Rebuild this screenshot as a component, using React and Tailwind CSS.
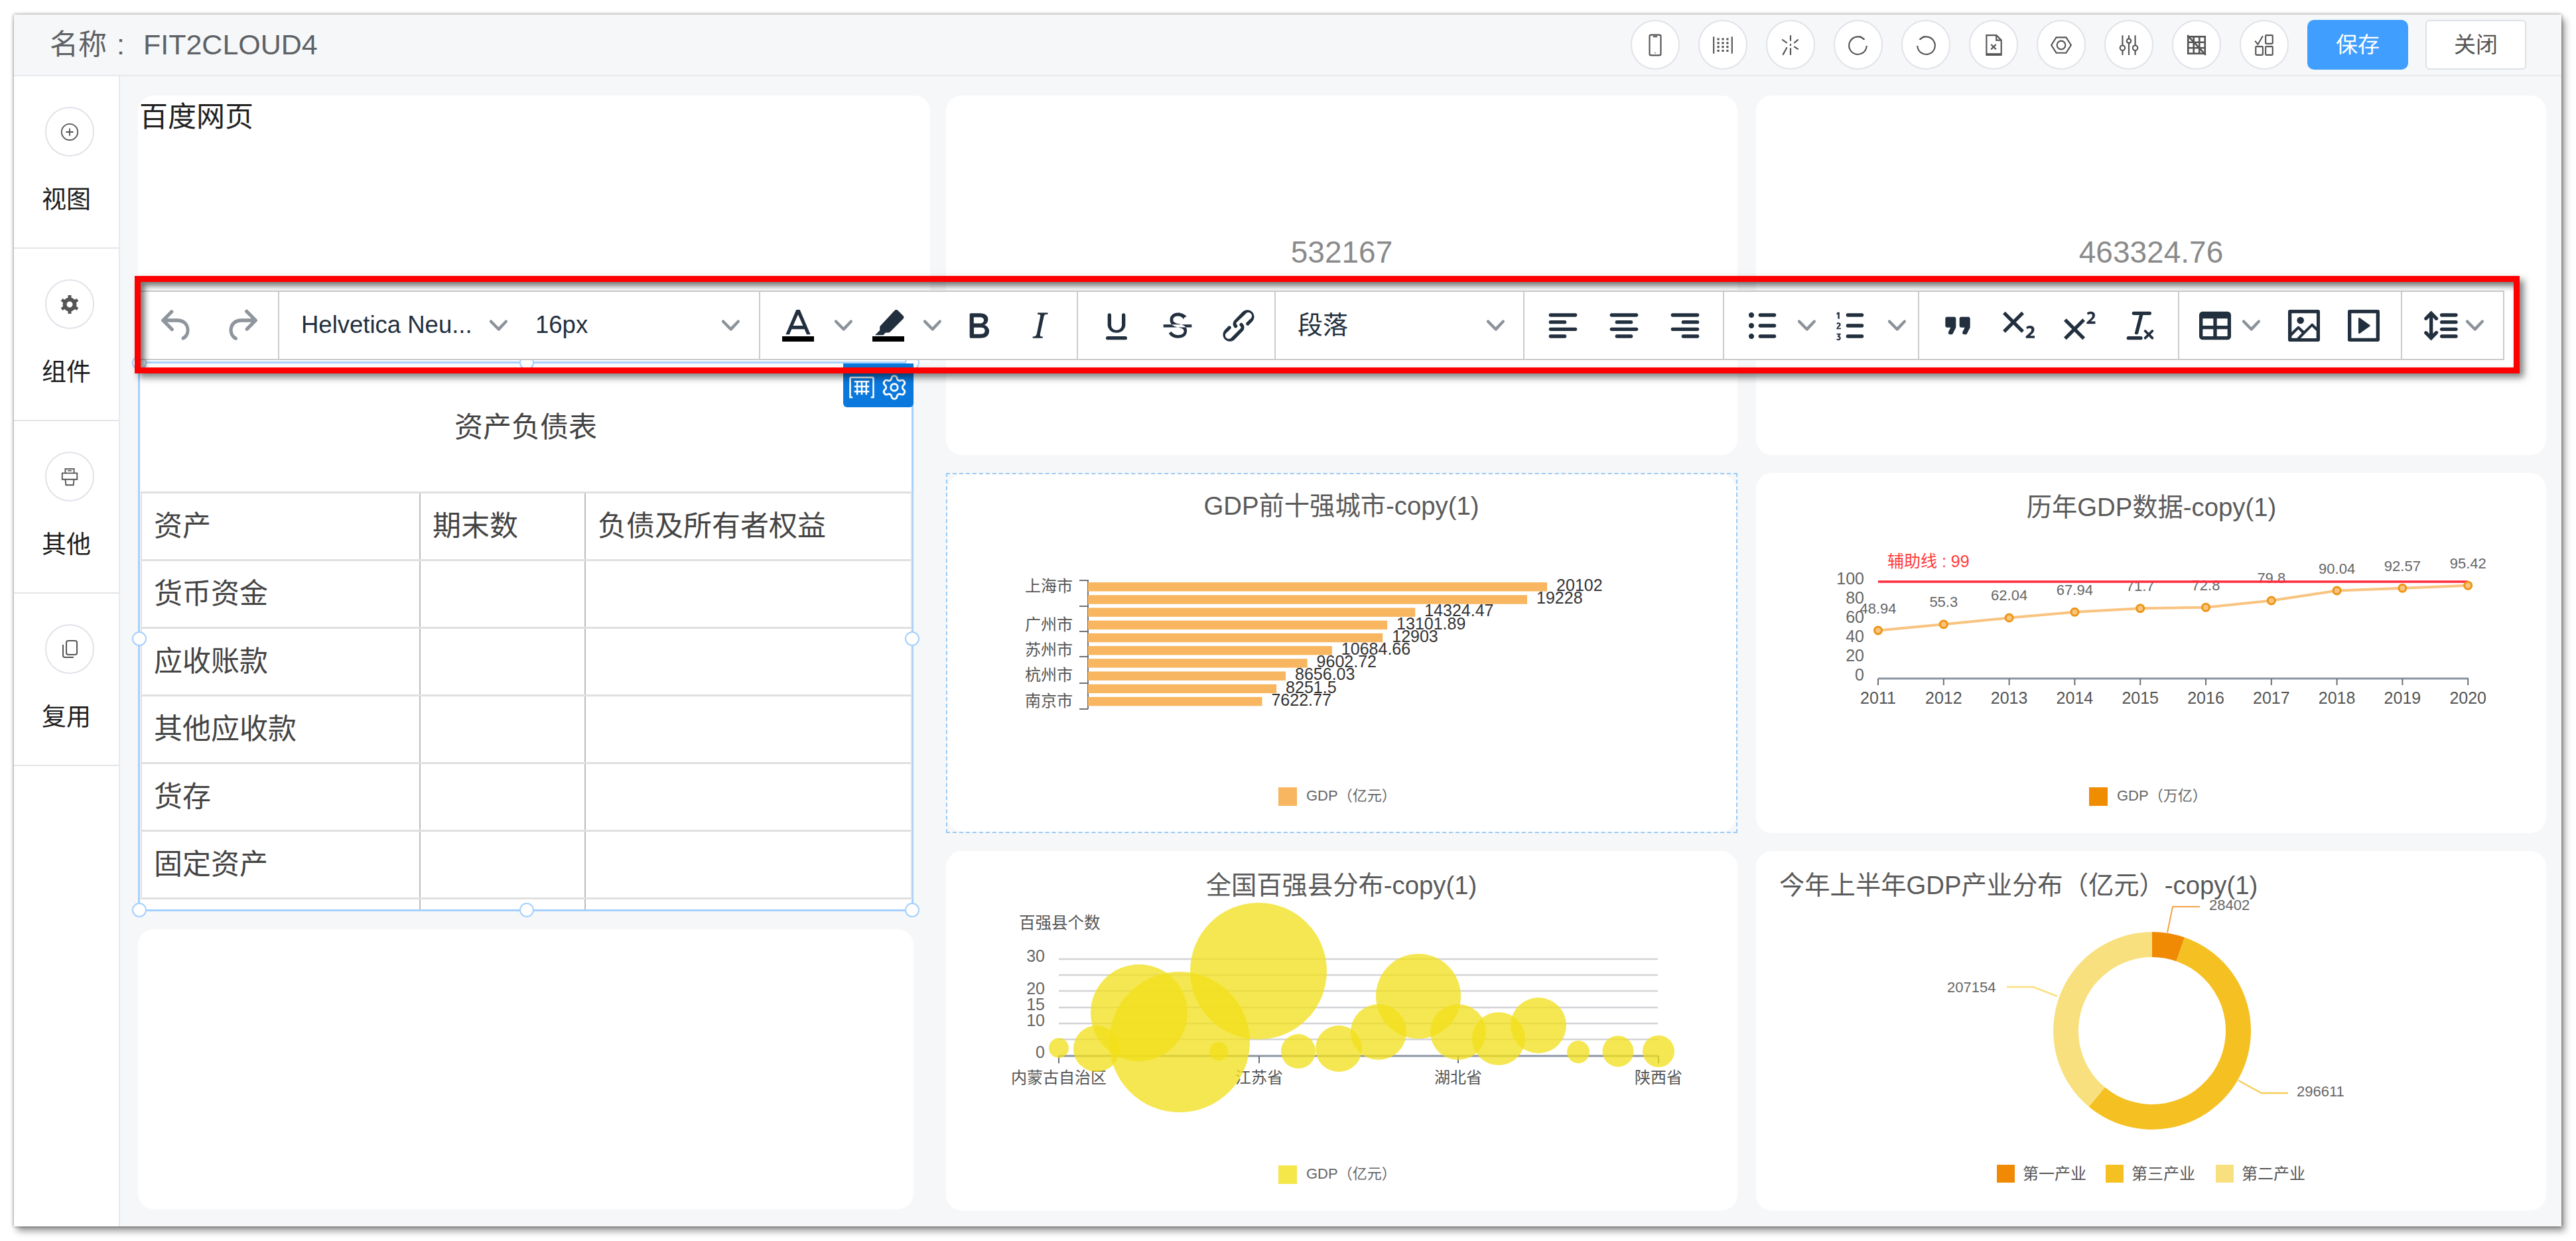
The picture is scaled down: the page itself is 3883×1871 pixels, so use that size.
import React from "react";
import { Settings } from "lucide-react";

const ink = "#222f3e";

// editor toolbar glyphs, 24 unit box
const paths = {
  undo: "M6.4 8H12c3.7 0 6.2 2 6.8 5.1.6 2.7-.4 5.6-2.9 6.9a1 1 0 01-.9-1.8c1.7-.9 2.4-2.9 2-4.7-.4-2.2-2.1-3.5-5-3.5H6.4l3.3 3.3a1 1 0 11-1.4 1.4l-5-5a1 1 0 010-1.4l5-5a1 1 0 011.4 1.4L6.4 8z",
  redo: "M17.6 10H12c-2.8 0-4.4 1.4-4.9 3.5-.4 2 .3 3.9 2 4.8a1 1 0 11-1 1.7c-2.4-1.3-3.4-4.2-2.9-6.9C5.8 10 8.3 8 12 8h5.6l-3.3-3.3a1 1 0 111.4-1.4l5 5a1 1 0 010 1.4l-5 5a1 1 0 01-1.4-1.4l3.3-3.3z",
  textColor: "M15.6 14H8.4l-1.3 3H5l6-14h2l6 14h-2.1l-1.3-3zm-.8-2L12 5.7 9.2 12h5.6z",
  marker: "M15.6 3.4c.5-.5 1.3-.5 1.8 0l3 3c.5.5.5 1.3 0 1.8l-7.3 7.3c-.3.3-.7.4-1 .4h-1.6l-1.4 1.4H4.5l2.7-2.7v-1.6c0-.4.1-.8.4-1z",
  bold: "M7.8 19c-.3 0-.5 0-.6-.2l-.2-.5V5.7c0-.2 0-.4.2-.5l.6-.2h5c1.5 0 2.7.3 3.5 1 .7.6 1.1 1.4 1.1 2.5a3 3 0 01-.6 1.9c-.4.6-1 1-1.6 1.2.4.1.9.3 1.3.6s.8.7 1 1.2c.4.4.5 1 .5 1.6 0 1.3-.4 2.3-1.3 3-.8.7-2.1 1-3.8 1H7.8zm5-8.3c.6 0 1.2-.1 1.6-.5.4-.3.6-.7.6-1.3 0-1.1-.8-1.7-2.3-1.7H9.3v3.5h3.5zm.5 6c.7 0 1.3-.1 1.7-.4.4-.4.6-.9.6-1.5s-.2-1-.7-1.4c-.4-.3-1-.4-2-.4H9.4v3.8h4z",
  italic: "M16.7 4.7l-.1.9h-.3c-.6 0-1 0-1.4.3-.3.3-.4.6-.5 1.1l-2.1 9.8v.6c0 .5.4.8 1.4.8h.2l-.2.8H8l.2-.8h.2c1.1 0 1.8-.5 2-1.5l2-9.8.1-.5c0-.6-.4-.8-1.4-.8h-.3l.2-.9h5.8z",
  underline: "M16 5c.6 0 1 .4 1 1v5.5a4 4 0 01-.4 1.8l-1 1.4a5.3 5.3 0 01-3.6 1.3c-1.4 0-2.6-.4-3.6-1.3l-1-1.4a4 4 0 01-.4-1.8V6c0-.6.4-1 1-1s1 .4 1 1v5.5c0 1.8 1.3 3 3 3s3-1.2 3-3V6c0-.6.4-1 1-1zm1 13a1 1 0 010 2H7a1 1 0 010-2h10z",
  strike: "M15.6 8.5c-.5-.7-1-1.1-1.3-1.3-.6-.4-1.3-.6-2-.6-2.7 0-2.8 1.7-2.8 2.1 0 1.6 1.8 2 3.2 2.3 4.4.9 4.6 2.8 4.6 3.9 0 1.4-.7 4.1-5 4.1A6.2 6.2 0 017 16.4l1.5-1.1c.4.6 1.6 2 3.7 2 1.6 0 2.5-.4 3-1 .3-.4.4-.9.4-1.3 0-.8-.6-1.5-3-2-2.3-.5-4.9-1.3-4.9-4.3 0-1.7 1.1-4 4.7-4 2.2 0 3.8 1 4.7 2.1l-1.5.7zM4 11.3h16v1.6H4z",
  link: "M6.2 12.3a1 1 0 011.4 1.4l-2 2a2 2 0 102.6 2.8l4.8-4.8a1 1 0 000-1.4 1 1 0 111.4-1.3 2.9 2.9 0 010 4L9.6 20a3.9 3.9 0 01-5.5-5.5l2-2zm11.6-.6a1 1 0 01-1.4-1.4l2-2a2 2 0 10-2.6-2.8L11 10a1 1 0 000 1.4A1 1 0 119.6 13a2.9 2.9 0 010-4L14.4 4a3.9 3.9 0 015.5 5.5l-2 2z",
  alignLeft: "M5 5h14c.6 0 1 .4 1 1s-.4 1-1 1H5a1 1 0 110-2zm0 4h8c.6 0 1 .4 1 1s-.4 1-1 1H5a1 1 0 110-2zm0 8h8c.6 0 1 .4 1 1s-.4 1-1 1H5a1 1 0 010-2zm0-4h14c.6 0 1 .4 1 1s-.4 1-1 1H5a1 1 0 010-2z",
  alignCenter: "M5 5h14c.6 0 1 .4 1 1s-.4 1-1 1H5a1 1 0 110-2zm3 4h8c.6 0 1 .4 1 1s-.4 1-1 1H8a1 1 0 110-2zm0 8h8c.6 0 1 .4 1 1s-.4 1-1 1H8a1 1 0 010-2zm-3-4h14c.6 0 1 .4 1 1s-.4 1-1 1H5a1 1 0 010-2z",
  alignRight: "M5 5h14c.6 0 1 .4 1 1s-.4 1-1 1H5a1 1 0 110-2zm6 4h8c.6 0 1 .4 1 1s-.4 1-1 1h-8a1 1 0 010-2zm0 8h8c.6 0 1 .4 1 1s-.4 1-1 1h-8a1 1 0 010-2zm-6-4h14c.6 0 1 .4 1 1s-.4 1-1 1H5a1 1 0 010-2z",
  bullets: "M11 5h8c.6 0 1 .4 1 1s-.4 1-1 1h-8a1 1 0 010-2zm0 6h8c.6 0 1 .4 1 1s-.4 1-1 1h-8a1 1 0 010-2zm0 6h8c.6 0 1 .4 1 1s-.4 1-1 1h-8a1 1 0 010-2zM4.5 6c0-.4.1-.8.4-1 .3-.4.7-.5 1.1-.5s.8.1 1 .4c.4.3.5.7.5 1.1s-.1.8-.4 1c-.3.4-.7.5-1.1.5s-.8-.1-1-.4c-.4-.3-.5-.7-.5-1.1zm0 6c0-.4.1-.8.4-1 .3-.4.7-.5 1.1-.5s.8.1 1 .4c.4.3.5.7.5 1.1s-.1.8-.4 1c-.3.4-.7.5-1.1.5s-.8-.1-1-.4c-.4-.3-.5-.7-.5-1.1zm0 6c0-.4.1-.8.4-1 .3-.4.7-.5 1.1-.5s.8.1 1 .4c.4.3.5.7.5 1.1s-.1.8-.4 1c-.3.4-.7.5-1.1.5s-.8-.1-1-.4c-.4-.3-.5-.7-.5-1.1z",
  numbers: "M11 17h8c.6 0 1 .4 1 1s-.4 1-1 1h-8a1 1 0 010-2zm0-6h8c.6 0 1 .4 1 1s-.4 1-1 1h-8a1 1 0 010-2zm0-6h8c.6 0 1 .4 1 1s-.4 1-1 1h-8a1 1 0 010-2zM5.3 4.4h1v3.8h-.9V5.500l-.7.3v-.8zM4.700 10.600c.3-.5 2.300-.6 2.300.7 0 1-1.400 1.500-1.500 2h1.600v.7H4.600c0-1.500 1.500-2 1.500-2.700 0-.5-.8-.4-1.200 0zM4.700 16.400h2.300v.6l-.9.9c1.400.2 1.200 2.400-.4 2.400-.4 0-.8-.1-1.100-.3l.2-.7c.5.3 1.400.4 1.400-.3 0-.4-.4-.5-1-.5v-.6l.7-.8H4.700z",
  quote: "M7.5 17h.9c.4 0 .7-.2.9-.6L11 13V8c0-.6-.4-1-1-1H6a1 1 0 00-1 1v4c0 .6.4 1 1 1h2l-1.3 2.700a1 1 0 00.8 1.300zm8 0h.9c.4 0 .7-.2.9-.6L19 13V8c0-.6-.4-1-1-1h-4a1 1 0 00-1 1v4c0 .6.4 1 1 1h2l-1.300 2.700a1 1 0 00.8 1.300z",
  sub: "M10.400 10l4.600 4.600-1.400 1.400L9 11.400 4.400 16 3 14.600 7.600 10 3 5.400 4.400 4 9 8.600 13.600 4 15 5.400 10.400 10zM21 19h-5v-1l1-.8 1.700-1.600c.3-.4.5-.8.5-1.200 0-.3 0-.6-.2-.7-.2-.2-.5-.3-.9-.3a2 2 0 00-.8.2l-.7.3-.4-1.100 1-.6 1.200-.2c.8 0 1.400.3 1.800.7.4.4.6.9.6 1.500s-.2 1.100-.5 1.600a8 8 0 01-1.300 1.300l-.6.6h2.600V19z",
  sup: "M15 9.400L10.400 14l4.600 4.600-1.400 1.400L9 15.400 4.400 20 3 18.600 7.600 14 3 9.400 4.400 8 9 12.600 13.600 8 15 9.400zm5.900 1.600h-5v-1l1-.8 1.700-1.600c.3-.5.5-.9.5-1.300 0-.3 0-.5-.2-.7-.2-.2-.5-.3-.9-.3l-.8.2-.7.4-.4-1.200c.2-.2.5-.4 1-.5.3-.2.8-.2 1.200-.2.7 0 1.300.2 1.700.6.4.4.6.9.6 1.500s-.2 1.200-.5 1.600a8 8 0 01-1.300 1.300l-.6.6h2.600V11z",
  clear: "M13.200 6a1 1 0 010 .2l-2.600 10a1 1 0 01-1 .8h-.2a.8.8 0 01-.8-1l2.600-10H8a1 1 0 110-2h9a1 1 0 010 2h-3.800zM5 18h7a1 1 0 010 2H5a1 1 0 010-2zm13 1.500L16.500 18 15 19.500a.7.7 0 01-1-1l1.500-1.500-1.500-1.500a.7.7 0 011-1l1.500 1.500 1.500-1.500a.7.7 0 011 1L17.500 17l1.500 1.500a.7.7 0 01-1 1z",
  table: "M19 4a2 2 0 012 2v12a2 2 0 01-2 2H5a2 2 0 01-2-2V6c0-1.100.9-2 2-2h14zM5 14v4h6v-4H5zm14 0h-6v4h6v-4zm0-6h-6v4h6V8zM5 12h6V8H5v4z",
  image: "M5 15.700l3.300-3.200c.3-.3.7-.3 1 0L12 15l4.100-4c.3-.4.8-.4 1 0l2 1.900V5H5v10.700zM5 18v1h3l2.800-2.900-2-2L5 17.900zm14-3l-2.500-2.400-6.400 6.500H19v-4zM4 3h16c.6 0 1 .4 1 1v16c0 .6-.4 1-1 1H4a1 1 0 01-1-1V4c0-.6.4-1 1-1zm6 8a2 2 0 110-4 2 2 0 010 4z",
  media: "M4 3h16c.6 0 1 .4 1 1v16c0 .6-.4 1-1 1H4a1 1 0 01-1-1V4c0-.6.4-1 1-1zm1 2v14h14V5H5zm4.800 2.600l5.600 4a.5.5 0 010 .8l-5.600 4A.5.5 0 019 16V8a.5.5 0 01.8-.4z",
  lineHeight: "M21 5a1 1 0 01.1 2H13a1 1 0 01-.1-2H21zm0 4a1 1 0 01.1 2H13a1 1 0 01-.1-2H21zm0 4a1 1 0 01.1 2H13a1 1 0 01-.1-2H21zm0 4a1 1 0 01.1 2H13a1 1 0 01-.1-2H21zM7 3.600l3.700 3.700a1 1 0 01-1.300 1.500h-.1L8 7.300v9.200l1.300-1.300a1 1 0 011.300 0h.1c.4.400.4 1 0 1.300v.1L7 20.400l-3.700-3.700a1 1 0 011.300-1.500h.1L6 16.700V7.400L4.700 8.700a1 1 0 01-1.300 0h-.1a1 1 0 010-1.300v-.1L7 3.600z",
};

function Ic({ d, color = ink, bar }) {
  return (
    <svg viewBox="0 0 24 24" className="h-[64px] w-[64px] shrink-0" fill={color} fillRule="evenodd">
      <path d={d} />
      {bar && <rect x="3" y="18" width="18" height="3" fill="#000" />}
    </svg>
  );
}

function Chev({ className = "" }) {
  return (
    <svg viewBox="0 0 10 10" className={`h-[27px] w-[27px] shrink-0 ${className}`} fill="#8b929a">
      <path d="M8.700 2.200c.3-.3.8-.3 1 0 .4.4.4.9 0 1.200L5.700 7.800c-.3.3-.9.3-1.200 0L.2 3.400a.8.8 0 010-1.200c.3-.3.8-.3 1.100 0L5 6l3.700-3.800z" />
    </svg>
  );
}

function Toolbar() {
  const group = "flex h-full shrink-0 items-center border-r-2 border-[#cccccc]";
  return (
    <div className="flex h-[105px] w-[3563px] border-y-2 border-r-2 border-[#cccccc] bg-white text-[36.5px] text-[#222f3e]">
      <div className={`${group} w-[209px] gap-[33px] pl-[23px]`}>
        <Ic d={paths.undo} color="#8f959c" />
        <Ic d={paths.redo} color="#8f959c" />
      </div>
      <div className={`${group} w-[725px] pl-[33px]`}>
        <div className="flex w-[311px] items-center justify-between">
          <span>Helvetica Neu...</span>
          <Chev />
        </div>
        <div className="ml-[42px] flex w-[308px] items-center justify-between">
          <span>16px</span>
          <Chev />
        </div>
      </div>
      <div className={`${group} w-[479px] pl-[25px]`}>
        <Ic d={paths.textColor} bar />
        <Chev className="ml-[23px]" />
        <div className="ml-[22px]"><Ic d={paths.marker} bar /></div>
        <Chev className="ml-[21px]" />
        <div className="ml-[24px]"><Ic d={paths.bold} /></div>
        <div className="ml-[28px]"><Ic d={paths.italic} /></div>
      </div>
      <div className={`${group} w-[298px] gap-[28px] pl-[26px]`}>
        <Ic d={paths.underline} />
        <Ic d={paths.strike} />
        <Ic d={paths.link} />
      </div>
      <div className={`${group} w-[375px] pl-[33px]`}>
        <div className="flex w-[312px] items-center justify-between text-[38px]">
          <span>段落</span>
          <Chev />
        </div>
      </div>
      <div className={`${group} w-[301px] gap-[28px] pl-[26px]`}>
        <Ic d={paths.alignLeft} />
        <Ic d={paths.alignCenter} />
        <Ic d={paths.alignRight} />
      </div>
      <div className={`${group} w-[294px] pl-[25px]`}>
        <Ic d={paths.bullets} />
        <Chev className="ml-[22px]" />
        <div className="ml-[19px]"><Ic d={paths.numbers} /></div>
        <Chev className="ml-[26px]" />
      </div>
      <div className={`${group} w-[392px] gap-[28px] pl-[26px]`}>
        <Ic d={paths.quote} />
        <Ic d={paths.sub} />
        <Ic d={paths.sup} />
        <Ic d={paths.clear} />
      </div>
      <div className={`${group} w-[336px] pl-[22px]`}>
        <Ic d={paths.table} />
        <Chev className="ml-[9px]" />
        <div className="ml-[34px]"><Ic d={paths.image} /></div>
        <div className="ml-[26px]"><Ic d={paths.media} /></div>
      </div>
      <div className="flex h-full flex-1 items-center pl-[25px]">
        <Ic d={paths.lineHeight} />
        <Chev className="ml-[7px]" />
      </div>
    </div>
  );
}

// small line icons of the header and the sidebar
function Line({ size = 36, children, color = "#555" }) {
  return (
    <svg viewBox="0 0 32 32" width={size} height={size} fill="none" stroke={color} strokeWidth="2">
      {children}
    </svg>
  );
}

const headerIcons = [
  <><rect x="8" y="1.500" width="16" height="29" rx="2" /><path d="M13 4h6M16 26.500v1" /></>,
  <><path d="M3 4v24M29 4v24" /><path d="M8 7.500h3M14.500 7.500h3M21 7.500h3M8 13h3M14.500 13h3M21 13h3M8 18.500h3M14.500 18.500h3M21 18.500h3M8 24h3M14.500 24h3M21 24h3" strokeWidth="3" /></>,
  <path d="M16 2v8M16 20v10M4 8l7 5M21 18l6 4M27 8l-6 5M11 19l-6 11M16 14v3" />,
  <><path d="M24 7.500A12.500 12.500 0 1 0 28 17" /><path d="M18 3.500l6 4-1 .5" /></>,
  <><path d="M8 7.500A12.500 12.500 0 1 1 4 17" /><path d="M14 3.500l-6 4 1 .5" /></>,
  <><path d="M6 2h14l7 7v21H6z" /><path d="M20 2v7h7M12.500 15l7 7M19.500 15l-7 7" /><path d="M6 29h21" strokeWidth="3" /></>,
  <><path d="M2 16L9 5h14l7 11-7 11H9z" /><circle cx="16" cy="16" r="6" /></>,
  <><path d="M7 2v15M7 24v6M16 2v5M16 13v17M25 2v15M25 24v6" /><circle cx="7" cy="20" r="3.500" /><circle cx="16" cy="10" r="3" /><circle cx="25" cy="20" r="3.500" /></>,
  <><rect x="4" y="4" width="24" height="24" strokeWidth="2.500" /><path d="M4 12h24M4 20h24M12 4v24M20 4v24" strokeWidth="2.500" /><path d="M3 2l26 28" strokeWidth="2.500" /></>,
  <><path d="M3 10l4 5 7-12" /><rect x="18" y="2" width="10" height="12" rx="1" /><rect x="4" y="18" width="10" height="12" rx="1" /><rect x="18" y="18" width="10" height="12" rx="1" /></>,
];

const Circle = ({ className = "", children }) => (
  <div className={`flex h-[75px] w-[74px] shrink-0 items-center justify-center rounded-full border-2 border-[#e1e3e9] bg-white ${className}`}>
    {children}
  </div>
);

const sideItems = [
  {
    label: "视图",
    icon: <Line size={30}><circle cx="16" cy="16" r="13" /><path d="M16 10v12M10 16h12" /></Line>,
  },
  {
    label: "组件",
    icon: (
      <Line size={32}>
        <circle cx="16" cy="16" r="7.500" strokeWidth="6" />
        <path d="M16 2v5M16 25v5M4 9l4 2.500M24 20.500l4 2.500M4 23l4-2.500M24 11.500L28 9" strokeWidth="5" />
      </Line>
    ),
  },
  {
    label: "其他",
    icon: <Line size={30}><path d="M9 3h14v7H9zM4 10h24v10H4zM9 20l1 9h12l1-9M9 3v3M13 6h6" /></Line>,
  },
  {
    label: "复用",
    icon: <Line size={32}><rect x="11" y="3" width="16" height="21" rx="3" /><path d="M6 9v16a3 3 0 003 3h13" /></Line>,
  },
];

function GridIcon() {
  return (
    <svg viewBox="0 0 32 28" className="h-[36px] w-[40px]" fill="none" stroke="#fff" strokeWidth="2">
      <path d="M2 2v24h3M30 2v24h-3M2 2h28" />
      <path d="M7 7h18M7 13h18M7 19h18M10.500 7v16M16 7v16M21.500 7v16" />
    </svg>
  );
}

const handles = [
  "-left-[12px] -top-[12px]",
  "left-[572px] -top-[12px]",
  "-right-[12px] -top-[12px]",
  "-left-[12px] top-[404px]",
  "-right-[12px] top-[404px]",
  "-left-[12px] -bottom-[12px]",
  "left-[572px] -bottom-[12px]",
  "-right-[12px] -bottom-[12px]",
];

const rows = ["货币资金", "应收账款", "其他应收款", "货存", "固定资产"];
const cell = "border-y-[3px] border-y-[#e0e0e0] pl-[18px] text-left font-normal";
const first = `${cell} border-l-2 border-l-[#e0e0e0]`;
const mid = `${cell} border-x-2 border-x-[#bdbdbd]`;
const last = `${cell} border-r-2 border-r-[#e0e0e0]`;

function BalanceSheet() {
  return (
    <div className="relative h-[829px] w-[1169px] border-[3px] border-[#a4d1fd] bg-white text-[43px] text-[#444]">
      <div className="flex h-[193px] items-center justify-center">资产负债表</div>
      <table className="ml-[1px] w-[1161px] table-fixed border-collapse">
        <colgroup>
          <col className="w-[420px]" />
          <col className="w-[249px]" />
          <col className="w-[492px]" />
        </colgroup>
        <tbody>
          <tr className="h-[102px]">
            <td className={first}>资产</td>
            <td className={mid}>期末数</td>
            <td className={last}>负债及所有者权益</td>
          </tr>
          {rows.map((r) => (
            <tr key={r} className="h-[102px]">
              <td className={first}>{r}</td>
              <td className={mid} />
              <td className={last} />
            </tr>
          ))}
          <tr className="h-[17px]">
            <td />
            <td className="border-x-2 border-x-[#bdbdbd]" />
            <td />
          </tr>
        </tbody>
      </table>
      {handles.map((h) => (
        <div key={h} className={`absolute h-[22px] w-[22px] rounded-full border-2 border-[#a4d1fd] bg-white ${h}`} />
      ))}
      <div className="absolute -right-[3px] top-[0px] flex h-[66px] w-[106px] items-center justify-center gap-[8px] rounded-b-[6px] bg-[#0a78dc] pt-[6px]">
        <GridIcon />
        <Settings size={42} color="#fff" strokeWidth={1.6} />
      </div>
    </div>
  );
}

function Legend({ x, color, label, y = 0 }) {
  return (
    <g>
      <rect x={x} y={y} width="28" height="28" fill={color} />
      <text x={x + 42} y={y + 20} fontSize="22" fill="#666">{label}</text>
    </g>
  );
}

const Title = ({ x, y, anchor = "middle", children }) => (
  <text x={x} y={y} textAnchor={anchor} fontSize="38.300" fill="#5a5a5a">{children}</text>
);

function BarChart() {
  const values = [20102, 19228, 14324.47, 13101.89, 12903, 10684.66, 9602.72, 8656.03, 8251.5, 7622.77];
  const names = { 0: "上海市", 3: "广州市", 5: "苏州市", 7: "杭州市", 9: "南京市" };
  return (
    <svg viewBox="1428 715 1189 539" className="block h-full w-full">
      <Title x={2022} y={776}>GDP前十强城市-copy(1)</Title>
      <path d="M1640 874V1069" stroke="#6e7079" strokeWidth="2" />
      {[875, 914, 952, 990, 1030, 1069].map((y) => (
        <path key={y} d={`M1627 ${y}H1640`} stroke="#6e7079" strokeWidth="2" />
      ))}
      {values.map((v, i) => {
        const y = 878 + i * 19.2;
        const end = 1640 + v * 0.03443;
        return (
          <g key={v}>
            <rect x="1640" y={y} width={end - 1640} height="13.500" fill="#f7b65f" />
            <text x={end + 14} y={y + 13} fontSize="25" fill="#333">{v}</text>
            {names[i] && (
              <text x="1617" y={y + 14} textAnchor="end" fontSize="24" fill="#555">{names[i]}</text>
            )}
          </g>
        );
      })}
      <Legend x={1927} y={1187} color="#f7b65f" label="GDP（亿元）" />
    </svg>
  );
}

function LineChart() {
  const values = [48.94, 55.3, 62.04, 67.94, 71.7, 72.8, 79.8, 90.04, 92.57, 95.42];
  const pts = values.map((v, i) => [2831 + i * 98.8, 1022 - v * 1.46]);
  return (
    <svg viewBox="2647 713 1191 543" className="block h-full w-full">
      <Title x={3243} y={778}>历年GDP数据-copy(1)</Title>
      <text x="2845" y="855" fontSize="25" fill="#ff3b3b">辅助线 : 99</text>
      {["100", "80", "60", "40", "20", "0"].map((t, i) => (
        <text key={t} x="2810" y={881 + i * 29} textAnchor="end" fontSize="25" fill="#666">{t}</text>
      ))}
      <path d="M2831 1023H3721" stroke="#8d95a3" strokeWidth="3" />
      {values.map((v, i) => (
        <g key={v}>
          <path d={`M${2831 + i * 98.8} 1023V1033`} stroke="#6e7079" strokeWidth="2" />
          <text x={2831 + i * 98.8} y="1061" textAnchor="middle" fontSize="25" fill="#555">{2011 + i}</text>
          <text x={pts[i][0]} y={pts[i][1] - 26} textAnchor="middle" fontSize="22" fill="#666">{v}</text>
        </g>
      ))}
      <path d="M2831 877H3720" stroke="#ff2a3c" strokeWidth="3.500" />
      <polyline points={pts.map((p) => p.join(",")).join(" ")} fill="none" stroke="#f8c480" strokeWidth="4" strokeLinejoin="round" />
      {pts.map((p) => (
        <circle key={p[0]} cx={p[0]} cy={p[1]} r="5.500" fill="#f8c480" stroke="#ee9513" strokeWidth="3" />
      ))}
      <Legend x={3149} y={1187} color="#f08c00" label="GDP（万亿）" />
    </svg>
  );
}

function BubbleChart() {
  // center x, center y, radius
  const bubbles = [
    [1596, 1580, 15], [1653, 1581, 35], [1717, 1527, 73], [1778, 1571, 106], [1897, 1464, 103],
    [1837, 1585, 14], [1957, 1585, 26], [2018, 1581, 35], [2078, 1556, 42], [2138, 1502, 64],
    [2198, 1556, 42], [2259, 1566, 40], [2319, 1546, 42], [2379, 1586, 17], [2439, 1585, 23.500], [2500, 1585, 24],
  ];
  return (
    <svg viewBox="1426 1283 1193 542" className="block h-full w-full">
      <Title x={2022} y={1348}>全国百强县分布-copy(1)</Title>
      <text x="1536" y="1400" fontSize="24.500" fill="#555">百强县个数</text>
      {[1446, 1470, 1494, 1519, 1543, 1567].map((y) => (
        <path key={y} d={`M1596 ${y}H2499`} stroke="#d4d4d8" strokeWidth="2.500" />
      ))}
      {[["30", 1450], ["20", 1499], ["15", 1523], ["10", 1547], ["0", 1595]].map(([t, y]) => (
        <text key={t} x="1575" y={y} textAnchor="end" fontSize="25" fill="#666">{t}</text>
      ))}
      <path d="M1596 1592H2500" stroke="#8d95a3" strokeWidth="3" />
      {[1596, 1898, 2198, 2500].map((x) => (
        <path key={x} d={`M${x} 1592V1603`} stroke="#6e7079" strokeWidth="2" />
      ))}
      {[["内蒙古自治区", 1596], ["江苏省", 1898], ["湖北省", 2198], ["陕西省", 2500]].map(([t, x]) => (
        <text key={t} x={x} y="1633" textAnchor="middle" fontSize="24" fill="#555">{t}</text>
      ))}
      {bubbles.map(([x, y, r]) => (
        <circle key={x} cx={x} cy={y} r={r} fill="#f2e01a" fillOpacity="0.76" />
      ))}
      <Legend x={1927} y={1757} color="#f5e64a" label="GDP（亿元）" />
    </svg>
  );
}

function arc(cx, cy, R, r, a0, a1) {
  const p = (rad, a) => {
    const t = ((a - 90) * Math.PI) / 180;
    return `${(cx + rad * Math.cos(t)).toFixed(2)} ${(cy + rad * Math.sin(t)).toFixed(2)}`;
  };
  const large = a1 - a0 > 180 ? 1 : 0;
  return `M${p(R, a0)}A${R} ${R} 0 ${large} 1 ${p(R, a1)}L${p(r, a1)}A${r} ${r} 0 ${large} 0 ${p(r, a0)}Z`;
}

function DonutChart() {
  const legend = [
    ["第一产业", 3010, "#f08a05"],
    ["第三产业", 3174, "#f5c022"],
    ["第二产业", 3340, "#f9e07f"],
  ];
  return (
    <svg viewBox="2647 1283 1191 542" className="block h-full w-full">
      <Title x={2682} y={1348} anchor="start">今年上半年GDP产业分布（亿元）-copy(1)</Title>
      <path d={arc(3244, 1554, 149, 111, 0, 19.2)} fill="#f08a05" />
      <path d={arc(3244, 1554, 149, 111, 19.2, 219.8)} fill="#f5c022" />
      <path d={arc(3244, 1554, 149, 111, 219.8, 360)} fill="#f9e07f" />
      <path d="M3267 1406L3275 1367H3316" fill="none" stroke="#f3a345" strokeWidth="2" />
      <path d="M3374 1629L3409 1648H3449" fill="none" stroke="#f6cd5a" strokeWidth="2.500" />
      <path d="M3101 1502L3065 1488H3025" fill="none" stroke="#f9e07f" strokeWidth="2.500" />
      <text x="3330" y="1372" fontSize="22" fill="#666">28402</text>
      <text x="3462" y="1653" fontSize="22" fill="#666">296611</text>
      <text x="2935" y="1496" fontSize="22" fill="#666">207154</text>
      {legend.map(([t, x, c]) => (
        <g key={t}>
          <rect x={x} y="1756" width="27" height="27" fill={c} />
          <text x={x + 39} y="1778" fontSize="24" fill="#555">{t}</text>
        </g>
      ))}
    </svg>
  );
}

const card = "rounded-[24px] bg-white";

export default function App() {
  return (
    <div className="relative h-[1871px] w-[3883px] overflow-hidden bg-white pl-[21px] pt-[22px] font-['Liberation_Sans','Noto_Sans_CJK_SC',sans-serif]">
      <div className="flex h-[1827px] w-[3840px] flex-col bg-[#f6f7f9] shadow-[0_0_5px_rgba(0,0,0,0.45),5px_7px_10px_rgba(0,0,0,0.4)]">
        <header className="flex h-[93px] shrink-0 items-center border-b-2 border-[#e8e9ec] pl-[54px] pr-[53px]">
          <div className="flex text-[43px] text-[#5f6266]">
            <span>名称</span>
            <span className="ml-[15px] mr-[28px]">:</span>
            <span>FIT2CLOUD4</span>
          </div>
          <div className="ml-auto flex gap-[28px]">
            {headerIcons.map((ic, i) => (
              <Circle key={i}>
                <Line size={34}>{ic}</Line>
              </Circle>
            ))}
          </div>
          <button className="ml-[28px] h-[75px] w-[152px] rounded-[10px] bg-[#409eff] text-[33px] text-white">保存</button>
          <button className="ml-[26px] h-[75px] w-[152px] rounded-[6px] border-2 border-[#dfe1e6] bg-white text-[33px] text-[#555]">关闭</button>
        </header>

        <div className="flex min-h-0 flex-1">
          <aside className="w-[160px] shrink-0 border-r-2 border-[#e8e9ec] bg-white">
            {sideItems.map((it) => (
              <div key={it.label} className="flex h-[260px] flex-col items-center border-b-2 border-[#e4e5e8] pt-[46px]">
                <Circle className="ml-[10px]">{it.icon}</Circle>
                <div className="mt-[43px] text-[37px] leading-[45px] text-[#1c1c1c]">{it.label}</div>
              </div>
            ))}
          </aside>

          <main className="flex min-w-0 flex-1 pl-[27px] pt-[29px]">
            <div className="mr-[24px] flex w-[1194px] shrink-0 flex-col">
              <div className="h-[401px] rounded-t-[24px] bg-white pl-[2px] pt-[6px] text-[43px] leading-[52px] text-[#222]">百度网页</div>
              <BalanceSheet />
              <div className="mt-[27px] h-[422px] w-[1169px] rounded-[24px] bg-white" />
            </div>

            <div className="grid h-[1681px] grid-cols-[1193px_1191px] grid-rows-[542px_543px_542px] gap-x-[28px] gap-y-[27px]">
              <div className={`${card} pt-[207px] text-center text-[46px] leading-[58px] text-[#8a8a8a]`}>532167</div>
              <div className={`${card} pt-[207px] text-center text-[46px] leading-[58px] text-[#8a8a8a]`}>463324.76</div>
              <div className="border-2 border-dashed border-[#9acbf5]">
                <div className={`${card} h-full`}><BarChart /></div>
              </div>
              <div className={card}><LineChart /></div>
              <div className={card}><BubbleChart /></div>
              <div className={card}><DonutChart /></div>
            </div>
          </main>
        </div>
      </div>

      {/* red annotation frame with the editor toolbar, on top of the canvas */}
      <div className="absolute left-[203px] top-[416px] h-[147px] w-[3595px] border-[9px] border-[#ff0000] pt-[13px] shadow-[6px_6px_10px_rgba(0,0,0,0.5)]">
        <Toolbar />
        <div className="pointer-events-none absolute inset-0 shadow-[inset_6px_6px_10px_rgba(0,0,0,0.55)]" />
      </div>
    </div>
  );
}
